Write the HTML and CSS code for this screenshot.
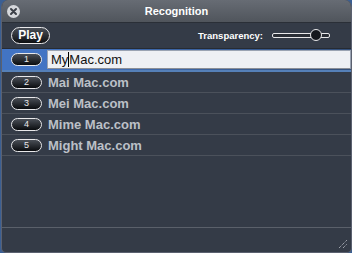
FILE: index.html
```html
<!DOCTYPE html>
<html lang="en">
<head>
    <meta charset="UTF-8">
    <title>Recognition</title>
    <link rel="stylesheet" href="styles.css">
</head>
<body>
    <div class="window">
        <div class="titlebar">
            <div class="close">
                <svg width="13" height="13" viewBox="0 0 13 13">
                    <circle cx="6.5" cy="6.5" r="6.5" fill="#d6d8dc"/>
                    <path d="M4 4 L9 9 M9 4 L4 9" stroke="#3c4048" stroke-width="2" stroke-linecap="round"/>
                </svg>
            </div>
            <span class="title">Recognition</span>
        </div>
        <div class="toolbar">
            <div class="pill play">Play</div>
            <div class="transparency">
                <span>Transparency:</span>
                <div class="slider"><div class="knob"></div></div>
            </div>
        </div>
        <div class="list">
            <div class="row selected">
                <div class="num">1</div>
                <div class="field">My<span class="caret"></span>Mac.com</div>
            </div>
            <div class="row">
                <div class="num">2</div>
                <div class="word">Mai Mac.com</div>
            </div>
            <div class="row">
                <div class="num">3</div>
                <div class="word">Mei Mac.com</div>
            </div>
            <div class="row">
                <div class="num">4</div>
                <div class="word">Mime Mac.com</div>
            </div>
            <div class="row">
                <div class="num">5</div>
                <div class="word">Might Mac.com</div>
            </div>
        </div>
        <div class="footer">
            <svg class="grip" width="10" height="10" viewBox="0 0 10 10">
                <path d="M1 9 L9 1 M5 9 L9 5" stroke="#c8ccd4" stroke-width="1" stroke-dasharray="1 1"/>
            </svg>
        </div>
    </div>
</body>
</html>
```
FILE: styles.css
```css
body {
    margin: 0;
    background: #3b5f93;
    font-family: 'Liberation Sans', Arial, sans-serif;
}
.window {
    width: 351px;
    height: 253px;
    margin-left: 1px;
    box-sizing: border-box;
    background: #343b47;
    border-radius: 7px 7px 5px 5px;
    border: 1px solid #5b6170;
    border-top: none;
    display: flex;
    flex-direction: column;
    overflow: hidden;
}
.titlebar {
    height: 22px;
    flex: none;
    background: linear-gradient(#676c74, #50555c);
    border-bottom: 1px solid #2a2f37;
    position: relative;
    display: flex;
    justify-content: center;
    align-items: center;
}
.close {
    position: absolute;
    left: 5px;
    top: 4px;
    height: 13px;
}
.title {
    color: #fff;
    font-size: 11px;
    font-weight: bold;
}
.toolbar {
    height: 25px;
    flex: none;
    display: flex;
    justify-content: space-between;
    align-items: center;
    padding: 0 21px 0 9px;
}
.pill {
    background: linear-gradient(#4a4f57, #0d0f12);
    border: 1px solid #e8e8ea;
    border-radius: 9px;
    color: #fff;
    font-weight: bold;
    text-align: center;
}
.play {
    width: 37px;
    height: 15px;
    line-height: 15px;
    font-size: 12px;
}
.transparency {
    display: flex;
    align-items: center;
    gap: 9px;
    color: #fff;
    font-size: 9.5px;
    font-weight: bold;
}
.slider {
    width: 56px;
    height: 3px;
    border: 1px solid #e8e8ea;
    border-radius: 2px;
    background: #2a2e36;
    position: relative;
}
.knob {
    position: absolute;
    left: 37px;
    top: -5px;
    width: 10px;
    height: 10px;
    border: 1px solid #e8e8ea;
    border-radius: 50%;
    background: #15181d;
}
.list {
    flex: 1;
    border-top: 1px solid #262b33;
}
.row {
    height: 20px;
    display: flex;
    align-items: center;
    gap: 5px;
    padding-left: 9px;
    border-bottom: 1px solid #4b515b;
}
.row.selected {
    height: 21px;
    background: linear-gradient(90deg, #4274c4 0, #4274c4 40px, #34507a 100%);
    border-bottom: 2px solid #5580b8;
}
.num {
    width: 29px;
    height: 11px;
    flex: none;
    background: linear-gradient(#4a4f57, #0a0c0f);
    border: 1px solid #e8e8ea;
    border-radius: 7px;
    color: #e8e8ea;
    font-size: 9px;
    line-height: 11px;
    text-align: center;
}
.word {
    color: #bcc0c7;
    font-size: 13px;
    font-weight: bold;
    padding-left: 1px;
}
.field {
    flex: 1;
    height: 17px;
    background: #eef0f4;
    border: 1px solid #9aa3b2;
    border-bottom-color: #8a8e96;
    color: #111;
    font-size: 13px;
    line-height: 17px;
    padding-left: 3px;
}
.caret {
    display: inline-block;
    width: 1px;
    height: 15px;
    background: #000;
    vertical-align: -3px;
}
.footer {
    height: 21px;
    flex: none;
    border-top: 1px solid #5a606a;
    display: flex;
    justify-content: flex-end;
    align-items: flex-end;
    padding: 0 3px 3px 0;
}
```
